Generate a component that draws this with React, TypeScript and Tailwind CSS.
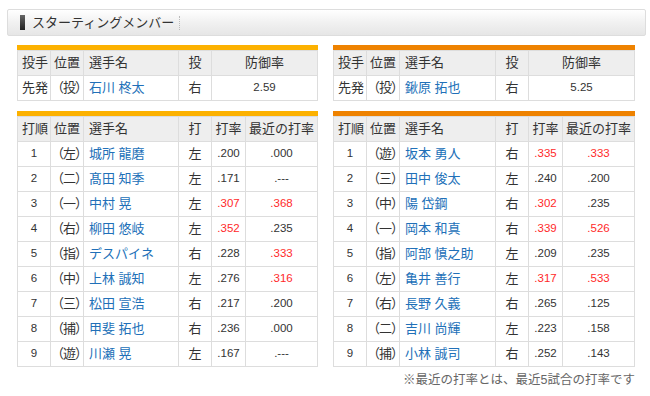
import React from 'react';

interface Pitcher {
  role: string;
  pos: string;
  name: string;
  hand: string;
  era: string;
}

interface Batter {
  order: number;
  pos: string;
  name: string;
  hand: string;
  avg: string;
  recent: string;
  avgHot?: boolean;
  recentHot?: boolean;
}

const homePitcher: Pitcher = { role: '先発', pos: '（投）', name: '石川 柊太', hand: '右', era: '2.59' };
const awayPitcher: Pitcher = { role: '先発', pos: '（投）', name: '鍬原 拓也', hand: '右', era: '5.25' };

const homeBatters: Batter[] = [
  { order: 1, pos: '（左）', name: '城所 龍磨', hand: '左', avg: '.200', recent: '.000' },
  { order: 2, pos: '（二）', name: '髙田 知季', hand: '左', avg: '.171', recent: '.---' },
  { order: 3, pos: '（一）', name: '中村 晃', hand: '左', avg: '.307', recent: '.368', avgHot: true, recentHot: true },
  { order: 4, pos: '（右）', name: '柳田 悠岐', hand: '左', avg: '.352', recent: '.235', avgHot: true },
  { order: 5, pos: '（指）', name: 'デスパイネ', hand: '右', avg: '.228', recent: '.333', recentHot: true },
  { order: 6, pos: '（中）', name: '上林 誠知', hand: '左', avg: '.276', recent: '.316', recentHot: true },
  { order: 7, pos: '（三）', name: '松田 宣浩', hand: '右', avg: '.217', recent: '.200' },
  { order: 8, pos: '（捕）', name: '甲斐 拓也', hand: '右', avg: '.236', recent: '.000' },
  { order: 9, pos: '（遊）', name: '川瀬 晃', hand: '左', avg: '.167', recent: '.---' },
];

const awayBatters: Batter[] = [
  { order: 1, pos: '（遊）', name: '坂本 勇人', hand: '右', avg: '.335', recent: '.333', avgHot: true, recentHot: true },
  { order: 2, pos: '（三）', name: '田中 俊太', hand: '左', avg: '.240', recent: '.200' },
  { order: 3, pos: '（中）', name: '陽 岱鋼', hand: '右', avg: '.302', recent: '.235', avgHot: true },
  { order: 4, pos: '（一）', name: '岡本 和真', hand: '右', avg: '.339', recent: '.526', avgHot: true, recentHot: true },
  { order: 5, pos: '（指）', name: '阿部 慎之助', hand: '左', avg: '.209', recent: '.235' },
  { order: 6, pos: '（左）', name: '亀井 善行', hand: '左', avg: '.317', recent: '.533', avgHot: true, recentHot: true },
  { order: 7, pos: '（右）', name: '長野 久義', hand: '右', avg: '.265', recent: '.125' },
  { order: 8, pos: '（二）', name: '吉川 尚輝', hand: '左', avg: '.223', recent: '.158' },
  { order: 9, pos: '（捕）', name: '小林 誠司', hand: '右', avg: '.252', recent: '.143' },
];

// cell colour is set per cell so that blue names and red averages are not overridden
const th = 'border border-[#dddddd] bg-[#eeeeee] font-normal text-[#333] h-[25px] p-0';
const td = 'border border-[#dddddd] bg-white h-[25px] p-0';
const dark = 'text-[#333]';
const link = 'text-[#2170b8]';
const hot = 'text-[#ff2a2a]';
const num = "font-['Liberation_Sans',sans-serif] text-[11.5px]";

const PitcherTable = ({ p, barColor, wide }: { p: Pitcher; barColor: string; wide: boolean }) => (
  <div>
    <div className={`h-[5px] ${barColor}`} />
    <table className="table-fixed border-collapse w-full text-[13px]">
      <colgroup>
        <col className="w-[33px]" />
        <col className="w-[33px]" />
        <col className={wide ? 'w-[96px]' : 'w-[95px]'} />
        <col className="w-[33px]" />
        <col />
      </colgroup>
      <thead>
        <tr>
          <th className={`${th} text-left pl-[4px]`}>投手</th>
          <th className={`${th} text-left pl-[3px]`}>位置</th>
          <th className={`${th} text-left pl-[5px]`}>選手名</th>
          <th className={`${th} text-center`}>投</th>
          <th className={`${th} text-center`}>防御率</th>
        </tr>
      </thead>
      <tbody>
        <tr>
          <td className={`${td} ${dark} pl-[4px]`}>{p.role}</td>
          <td className={`${td} ${dark} whitespace-nowrap -tracking-[1px]`}>{p.pos}</td>
          <td className={`${td} ${link} pl-[5px]`}>{p.name}</td>
          <td className={`${td} ${dark} text-center`}>{p.hand}</td>
          <td className={`${td} ${dark} text-center ${num}`}>{p.era}</td>
        </tr>
      </tbody>
    </table>
  </div>
);

const BatterTable = ({ rows, barColor, wide }: { rows: Batter[]; barColor: string; wide: boolean }) => (
  <div>
    <div className={`h-[5px] ${barColor}`} />
    <table className="table-fixed border-collapse w-full text-[13px]">
      <colgroup>
        <col className="w-[33px]" />
        <col className="w-[33px]" />
        <col className={wide ? 'w-[96px]' : 'w-[95px]'} />
        <col className="w-[33px]" />
        <col className="w-[34px]" />
        <col />
      </colgroup>
      <thead>
        <tr>
          <th className={`${th} text-left pl-[4px]`}>打順</th>
          <th className={`${th} text-left pl-[3px]`}>位置</th>
          <th className={`${th} text-left pl-[5px]`}>選手名</th>
          <th className={`${th} text-center`}>打</th>
          <th className={`${th} text-center`}>打率</th>
          <th className={`${th} text-center whitespace-nowrap`}>最近の打率</th>
        </tr>
      </thead>
      <tbody>
        {rows.map((b) => (
          <tr key={b.order}>
            <td className={`${td} ${dark} text-center ${num}`}>{b.order}</td>
            <td className={`${td} ${dark} whitespace-nowrap -tracking-[1px]`}>{b.pos}</td>
            <td className={`${td} ${link} pl-[5px] whitespace-nowrap`}>{b.name}</td>
            <td className={`${td} ${dark} text-center`}>{b.hand}</td>
            <td className={`${td} text-center ${num} ${b.avgHot ? hot : dark}`}>{b.avg}</td>
            <td className={`${td} text-center ${num} ${b.recentHot ? hot : dark}`}>{b.recent}</td>
          </tr>
        ))}
      </tbody>
    </table>
  </div>
);

export default function App() {
  return (
    <div className="w-[650px] h-[396px] bg-white overflow-hidden font-['Liberation_Sans','Noto_Sans_CJK_JP',sans-serif] pt-[9px]">
      <div className="ml-[7px] w-[639px] h-[27px] rounded-[2px] border border-[#dddddd] bg-gradient-to-b from-white via-[#f1f1f1] to-[#e6e6e6] flex items-center">
        <div className="ml-[12px] w-[5px] h-[15px] bg-gradient-to-b from-[#666] to-[#222]" />
        <span className="ml-[7px] text-[13px] text-[#333] leading-none">スターティングメンバー</span>
        <span className="ml-[5px] h-[14px] border-l border-dotted border-[#bbb]" />
      </div>

      <div className="flex gap-[15px] pl-[17px] mt-[9px]">
        <div className="w-[301px]">
          <PitcherTable p={homePitcher} barColor="bg-[#fcb100]" wide={false} />
          <div className="mt-[10px]">
            <BatterTable rows={homeBatters} barColor="bg-[#fcb100]" wide={false} />
          </div>
        </div>
        <div className="w-[302px]">
          <PitcherTable p={awayPitcher} barColor="bg-[#ee8200]" wide={true} />
          <div className="mt-[10px]">
            <BatterTable rows={awayBatters} barColor="bg-[#ee8200]" wide={true} />
          </div>
          <p className="mt-[4px] text-right text-[12.5px] text-[#666] whitespace-nowrap">※最近の打率とは、最近5試合の打率です</p>
        </div>
      </div>
    </div>
  );
}
